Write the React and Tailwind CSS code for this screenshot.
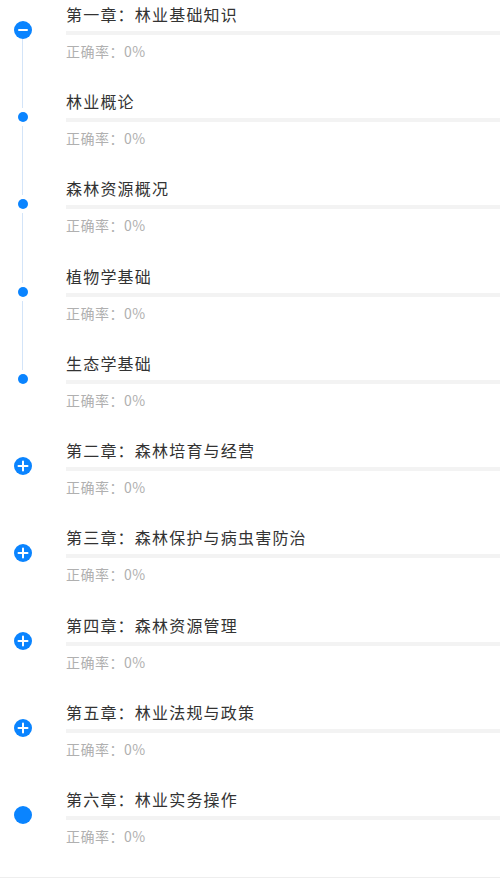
import React from "react";

const items = [
  { title: "第一章：林业基础知识", type: "minus", top: false, bottom: true },
  { title: "林业概论", type: "dot", top: true, bottom: true },
  { title: "森林资源概况", type: "dot", top: true, bottom: true },
  { title: "植物学基础", type: "dot", top: true, bottom: true },
  { title: "生态学基础", type: "dot", top: true, bottom: false },
  { title: "第二章：森林培育与经营", type: "plus" },
  { title: "第三章：森林保护与病虫害防治", type: "plus" },
  { title: "第四章：森林资源管理", type: "plus" },
  { title: "第五章：林业法规与政策", type: "plus" },
  { title: "第六章：林业实务操作", type: "full" },
];

function Marker({ type }) {
  if (type === "dot") {
    return <div className="w-[10px] h-[10px] rounded-full bg-[#0a84ff] my-[4px]" />;
  }
  return (
    <div className="w-[18px] h-[18px] rounded-full bg-[#0a84ff] flex items-center justify-center">
      {type === "minus" && <div className="w-[10px] h-[2px] bg-white rounded-sm" />}
      {type === "plus" && (
        <svg width="12" height="12" viewBox="0 0 12 12">
          <path d="M6 1.5v9M1.5 6h9" stroke="#fff" strokeWidth="2" strokeLinecap="round" />
        </svg>
      )}
    </div>
  );
}

function Row({ item }) {
  return (
    <div className="flex h-[87.22px]">
      <div className="w-[45px] flex flex-col items-center shrink-0">
        <div className={`w-px h-[21px] ${item.top ? "bg-[#d3e4f8]" : ""}`} />
        <Marker type={item.type} />
        <div className={`w-px flex-1 ${item.bottom ? "bg-[#d3e4f8]" : ""}`} />
      </div>
      <div className="flex-1 ml-[21px]">
        <div className="text-[16px] leading-[28px] tracking-[1.2px] text-[#333]">{item.title}</div>
        <div className="mt-[3px] h-[4px] bg-[#f3f3f3]" />
        <div className="mt-[6px] text-[14px] leading-[20px] tracking-[0.5px] text-[#b0b0b0]">正确率：0%</div>
      </div>
    </div>
  );
}

export default function App() {
  return (
    <div
      className="w-[500px] bg-white pb-[5px] border-b border-[#eeeeee]"
      style={{ fontFamily: '"Noto Sans CJK SC", "Noto Sans", sans-serif' }}
    >
      {items.map((item, index) => (
        <Row key={index} item={item} />
      ))}
    </div>
  );
}
